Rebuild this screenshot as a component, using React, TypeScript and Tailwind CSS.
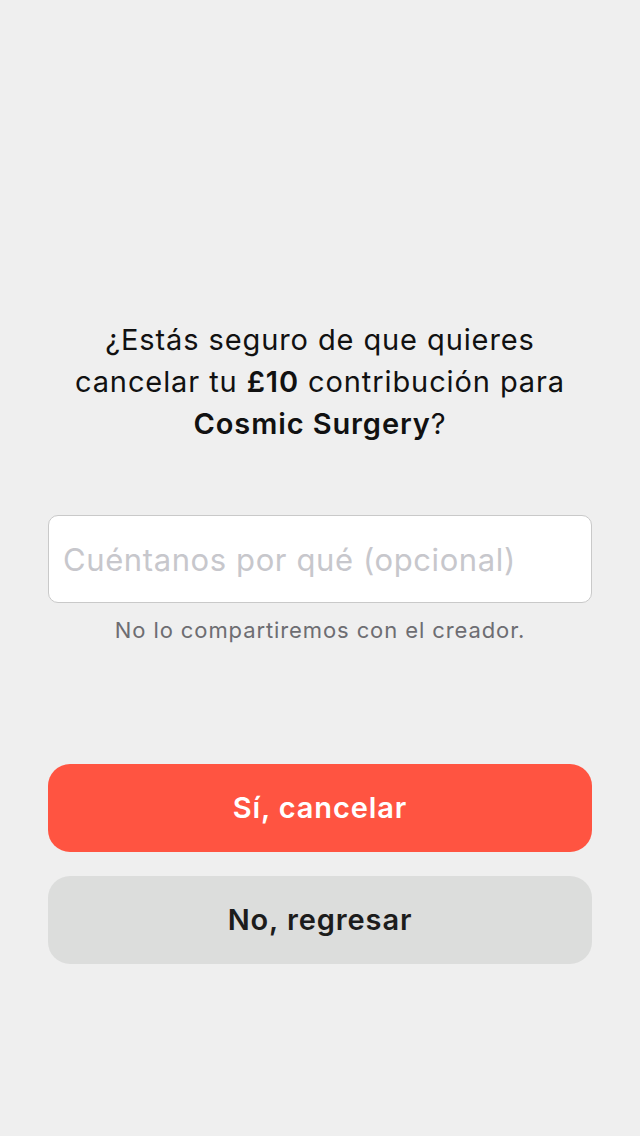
export default function App() {
  return (
    <div
      className="min-h-[1136px] w-full bg-[#efefef] px-12 pt-[319px]"
      style={{ fontFamily: 'Inter, "Noto Sans", sans-serif' }}
    >
      <h1 className="text-center text-[29px] font-normal leading-[42px] tracking-[0.9px] text-[#111111]">
        ¿Estás seguro de que quieres
        <br />
        cancelar tu <span className="font-semibold">£10</span> contribución para
        <br />
        <span className="font-semibold">Cosmic Surgery</span>?
      </h1>

      <div className="mt-[70px]">
        <input
          type="text"
          placeholder="Cuéntanos por qué (opcional)"
          className="h-[88px] w-full rounded-[10px] border border-[#c9c9c9] bg-white px-[14px] text-[31px] tracking-[0.6px] text-[#111111] outline-none placeholder:text-[#c7c7cc]"
        />
        <p className="mt-[15px] text-center text-[22px] leading-[24px] tracking-[0.9px] text-[#6d6d72]">
          No lo compartiremos con el creador.
        </p>
      </div>

      <div className="mt-[122px] flex flex-col gap-6">
        <button className="h-[88px] w-full rounded-[22px] bg-[#ff5441] text-[29px] font-semibold tracking-[0.9px] text-white">
          Sí, cancelar
        </button>
        <button className="h-[88px] w-full rounded-[22px] bg-[#dcdddc] text-[29px] font-semibold tracking-[0.9px] text-[#1c1c1c]">
          No, regresar
        </button>
      </div>
    </div>
  );
}
